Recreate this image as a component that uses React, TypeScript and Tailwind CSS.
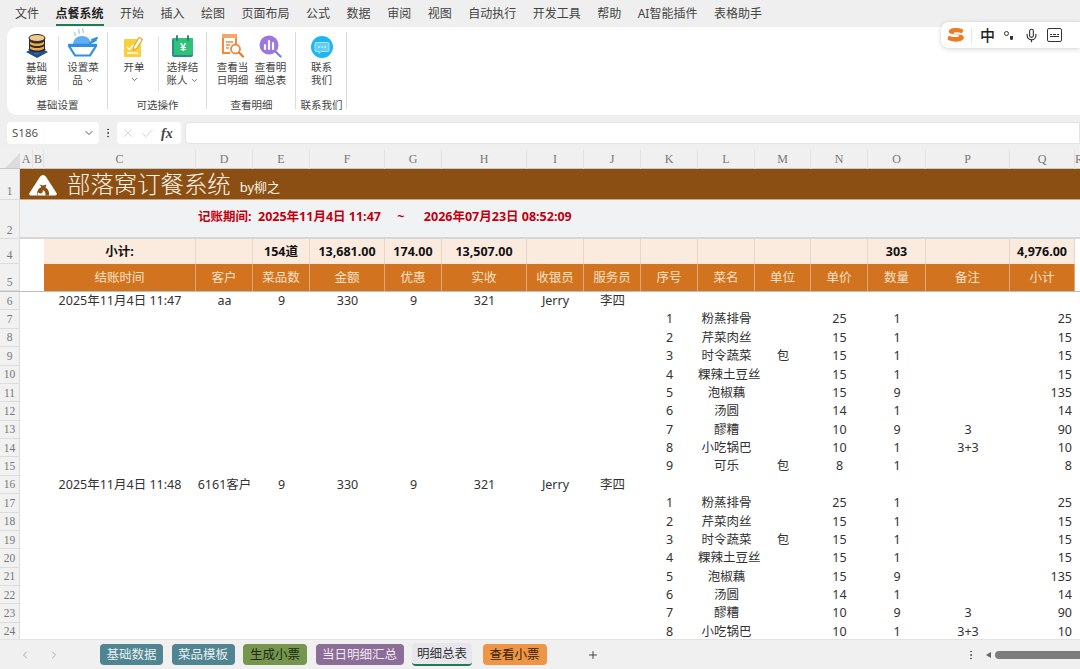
import { ChevronDown, ChevronLeft, ChevronRight, Plus, X, Check, Mic, EllipsisVertical } from 'lucide-react';

// row header + columns A..R, shared by every sheet row
const cols =
  'grid grid-cols-[20px_13px_11px_152px_57px_57px_75px_57px_85px_57px_57px_57px_57px_56px_57px_58px_84px_65px_1fr]';

const menus = ['文件', '点餐系统', '开始', '插入', '绘图', '页面布局', '公式', '数据', '审阅', '视图', '自动执行', '开发工具', '帮助', 'AI智能插件', '表格助手'];
const letters = ['A', 'B', 'C', 'D', 'E', 'F', 'G', 'H', 'I', 'J', 'K', 'L', 'M', 'N', 'O', 'P', 'Q', 'R'];
const subtotal = ['小计:', '', '154道', '13,681.00', '174.00', '13,507.00', '', '', '', '', '', '', '303', '', '4,976.00'];
const headers = ['结账时间', '客户', '菜品数', '金额', '优惠', '实收', '收银员', '服务员', '序号', '菜名', '单位', '单价', '数量', '备注', '小计'];

const dishes = [
  ['粉蒸排骨', '', '25', '1', '', '25'],
  ['芹菜肉丝', '', '15', '1', '', '15'],
  ['时令蔬菜', '包', '15', '1', '', '15'],
  ['粿辣土豆丝', '', '15', '1', '', '15'],
  ['泡椒藕', '', '15', '9', '', '135'],
  ['汤圆', '', '14', '1', '', '14'],
  ['醪糟', '', '10', '9', '3', '90'],
  ['小吃锅巴', '', '10', '1', '3+3', '10'],
  ['可乐', '包', '8', '1', '', '8'],
];

const tabs = [
  { name: '基础数据', cls: 'w-[63px] bg-[#4f8490] text-[#e6f0f2]' },
  { name: '菜品模板', cls: 'w-[63px] bg-[#4f8490] text-[#e6f0f2]' },
  { name: '生成小票', cls: 'w-[64px] bg-[#76964f] text-[#1d2a10]' },
  { name: '当日明细汇总', cls: 'w-[88px] bg-[#8b6d98] text-[#f1e8f4]' },
];

function DbIcon() {
  return (
    <svg width="24" height="24" viewBox="0 0 24 24">
      <path d="M12 12 23 18 12 24 1 18Z" fill="#1f4f8f" />
      <path d="M12 10 21 15.5 12 21 3 15.5Z" fill="#2d6fb5" />
      <path d="M4 4v11c0 2 3.6 3.6 8 3.6s8-1.600 8-3.600V4Z" fill="#2b2b2b" />
      <ellipse cx="12" cy="4" rx="8" ry="3.500" fill="#f4c98c" stroke="#2b2b2b" />
      <path d="M5 7.500c1.500 1.500 4 2 7 2s5.500-.5 7-2v2.500c-1.500 1.500-4 2-7 2s-5.500-.5-7-2Z" fill="#f0a94e" />
      <path d="M5 12c1.500 1.500 4 2 7 2s5.500-.5 7-2v2.500c-1.500 1.500-4 2-7 2s-5.500-.5-7-2Z" fill="#f0a94e" />
    </svg>
  );
}

function BowlIcon() {
  return (
    <svg width="30" height="30" viewBox="0 0 30 30">
      <path d="M11 1c-1 2 1 3 0 5M15 0c-1 2 1 3 0 5M7 4c-1 1.500 1 2.500 0 4" stroke="#a8cdf2" strokeWidth="1.300" fill="none" />
      <path d="M5 17c0-6 4-9 9-9s9 3 9 9Z" fill="#62aef0" />
      <path d="M24 12l5-2" stroke="#2f8fe6" strokeWidth="2" strokeLinecap="round" />
      <path d="M22 15l6-3" stroke="#2f8fe6" strokeWidth="2" strokeLinecap="round" />
      <path d="M1 18h27l-6 9.500H7Z" fill="#fff" stroke="#2f8fe6" strokeWidth="2.200" strokeLinejoin="round" />
      <path d="M1 17h27" stroke="#2f8fe6" strokeWidth="2.500" strokeLinecap="round" />
    </svg>
  );
}

function NoteIcon() {
  return (
    <svg width="22" height="22" viewBox="0 0 22 22">
      <rect x="1" y="3" width="17" height="18" rx="1" fill="#f9cf3b" />
      <path d="M4 11l2.500 2.500L11 8.500" stroke="#fff" strokeWidth="1.500" fill="none" />
      <path d="M4 17h11" stroke="#fff" strokeWidth="1.500" />
      <path d="M16 1.500l3.500 2-6 9-3 1.500.3-3.500Z" fill="#fff" stroke="#e9a826" strokeWidth="1.100" />
    </svg>
  );
}

function CalendarIcon() {
  return (
    <svg width="23" height="23" viewBox="0 0 23 23">
      <rect x="1" y="3" width="21" height="19" rx="2" fill="#2b8c8c" />
      <path d="M3 3h19v15a2 2 0 0 1-2 2H3Z" fill="#2fc07a" />
      <path d="M6 1v4M17 1v4" stroke="#1f7f70" strokeWidth="1.800" strokeLinecap="round" />
      <text x="12" y="16" textAnchor="middle" fontSize="11" fontWeight="700" fill="#fff" fontFamily="Liberation Sans">¥</text>
    </svg>
  );
}

function DocSearchIcon() {
  return (
    <svg width="24" height="24" viewBox="0 0 24 24">
      <path d="M2 1h13v9" fill="none" stroke="#f2893d" strokeWidth="2" />
      <path d="M2 1v18h7" fill="none" stroke="#f2893d" strokeWidth="2" />
      <rect x="1" y="0" width="15" height="4" fill="#f7a468" />
      <path d="M5 8h7M5 11h4M5 14h3" stroke="#f2893d" strokeWidth="1.500" />
      <circle cx="14.500" cy="15" r="4.500" fill="#fff" stroke="#f2893d" strokeWidth="1.800" />
      <path d="M18 18.500l4 4" stroke="#e8742a" strokeWidth="2.200" strokeLinecap="round" />
    </svg>
  );
}

function ChartSearchIcon() {
  return (
    <svg width="23" height="23" viewBox="0 0 23 23">
      <circle cx="10" cy="10" r="9.500" fill="#9a78dd" />
      <path d="M6 10v4M10 6v8M14 8v6" stroke="#fff" strokeWidth="2.200" strokeLinecap="round" />
      <path d="M17 17l4.500 4.500" stroke="#7b86d6" strokeWidth="2.400" strokeLinecap="round" />
    </svg>
  );
}

function ChatIcon() {
  return (
    <svg width="22" height="22" viewBox="0 0 22 22">
      <circle cx="11" cy="11" r="11" fill="#1fb6f0" />
      <path d="M5 6.500h12a1 1 0 0 1 1 1v7a1 1 0 0 1-1 1h-7l-2 2v-2H5a1 1 0 0 1-1-1v-7a1 1 0 0 1 1-1Z" fill="#62cdf6" stroke="#c4eefc" strokeWidth=".8" />
      <circle cx="8" cy="11" r=".8" fill="#fff" />
      <circle cx="11" cy="11" r=".8" fill="#fff" />
      <circle cx="14" cy="11" r=".8" fill="#fff" />
    </svg>
  );
}

function LogoIcon() {
  return (
    <svg width="30" height="22" viewBox="0 0 30 22">
      <path d="M15 1c1.500 0 2.500 1 3.500 2.500L28.500 19c.8 1.300 0 2.500-1.500 2.500H3c-1.500 0-2.300-1.200-1.500-2.500L11.500 3.500C12.500 2 13.500 1 15 1Z" fill="#fff" />
      <path d="M9 21.500c-.5-5 2-7.500 4.500-8.500l-2-2.500 3.500 1 3.500-1-1 3c2.500 1.500 4 4 3.500 8h-3.500c.5-3-1-5-3-5.500 1 1.500 0 3.500-2 3.500-1.500 0-2.500-1-2.500-2-.5 1.500-.5 3-.5 4.500Z" fill="#8b4f14" />
    </svg>
  );
}

function SogouIcon() {
  return (
    <svg width="18" height="16" viewBox="0 0 18 16">
      <path d="M16.500 3C13 .5 6 .5 3 2.500.5 4.500 2 6.500 5 7l6 .8c1.500.3 1.500 1.200.5 1.700-2 1-6.500.8-10-.8L.5 12.500c4 2.500 11.500 3 15 .5 2.500-2 1.500-4.500-2-5.200L7.500 7c-1.200-.3-1-1.200 0-1.500 2-.6 5-.4 7.500.8Z" fill="#ee7a22" />
    </svg>
  );
}

function RibbonBtn({ icon, lines, arrow, cls }: { icon: React.ReactNode; lines: string[]; arrow?: boolean; cls: string }) {
  return (
    <div className={`flex flex-col items-center text-[10.5px] leading-[13px] text-[#444] ${cls}`}>
      <div className="flex h-[32px] w-full items-end justify-center pb-[1px]">{icon}</div>
      <div className="mt-[2px] flex w-full flex-col items-center">
        {lines.map((l, i) => (
          <div key={i} className="flex items-center whitespace-nowrap">
            {l}
            {arrow && i === lines.length - 1 && <ChevronDown className="ml-[2px] h-[9px] w-[9px]" />}
          </div>
        ))}
        {arrow && lines.length === 1 && null}
      </div>
    </div>
  );
}

function RibbonGroup({ label, width, children }: { label: string; width: string; children: React.ReactNode }) {
  return (
    <div className={`relative flex h-full flex-col ${width}`}>
      <div className="flex h-[72px] items-start">{children}</div>
      <div className="text-center text-[10.5px] leading-[13px] text-[#444]">{label}</div>
      <div className="absolute right-0 top-[5px] h-[77px] w-px bg-[#dcdcdc]" />
    </div>
  );
}

function Sep() {
  return <div className="mt-[9px] h-[55px] w-px shrink-0 bg-[#e2e2e2]" />;
}

function RowHead({ n, cls = 'items-end pb-[1px]' }: { n: number; cls?: string }) {
  return (
    <div className={`flex justify-center border-b border-r border-[#dcdcdc] bg-[#f1f1f1] font-['Liberation_Serif',serif] text-[11.5px] leading-[14px] text-[#777] ${cls}`}>
      {n}
    </div>
  );
}

function InfoRow({ n, time, customer }: { n: number; time: string; customer: string }) {
  const cells = [time, customer, '9', '330', '9', '321', 'Jerry', '李四'];
  return (
    <div className={`${cols} h-[18.39px] text-[12.5px] leading-[18px] text-[#333]`}>
      <RowHead n={n} cls="items-center" />
      <div />
      <div />
      {cells.map((c, i) => (
        <div key={i} className="whitespace-nowrap text-center">{c}</div>
      ))}
    </div>
  );
}

function DishRow({ n, seq, dish }: { n: number; seq: number; dish: string[] }) {
  return (
    <div className={`${cols} h-[18.39px] text-[12.5px] leading-[18px] text-[#333]`}>
      <RowHead n={n} cls="items-center" />
      <div className="col-span-10" />
      <div className="text-center">{seq}</div>
      <div className="whitespace-nowrap text-center">{dish[0]}</div>
      <div className="text-center">{dish[1]}</div>
      <div className="text-center">{dish[2]}</div>
      <div className="text-center">{dish[3]}</div>
      <div className="text-center">{dish[4]}</div>
      <div className="pr-[3px] text-right">{dish[5]}</div>
    </div>
  );
}

export default function App() {
  return (
    <div className="relative flex h-[669px] w-[1080px] flex-col overflow-hidden bg-[#efefef] font-['Noto_Sans','Noto_Sans_CJK_SC',sans-serif]">
      {/* menu bar */}
      <div className="flex h-[27px] shrink-0 items-start gap-[16.500px] pl-[15px] pt-[5px] text-[12px] leading-[18px] text-[#444]">
        {menus.map((m) => (
          <div key={m} className={m === '点餐系统' ? 'whitespace-nowrap border-b-2 border-[#1e7a54] pb-[1px] font-bold text-[#222]' : 'whitespace-nowrap'}>
            {m}
          </div>
        ))}
      </div>

      {/* ribbon */}
      <div className="ml-[7px] flex h-[88px] shrink-0 rounded-l-[10px] bg-white">
        <RibbonGroup label="基础设置" width="w-[101px]">
          <RibbonBtn icon={<DbIcon />} lines={['基础', '数据']} cls="ml-[8px] w-[43px]" />
          <Sep />
          <RibbonBtn icon={<BowlIcon />} lines={['设置菜', '品']} arrow cls="w-[48px]" />
        </RibbonGroup>
        <RibbonGroup label="可选操作" width="w-[99px]">
          <div className="ml-[5px] w-[42px]">
            <RibbonBtn icon={<NoteIcon />} lines={['开单']} cls="w-full" />
            <div className="flex justify-center"><ChevronDown className="mt-[1px] h-[9px] w-[9px] text-[#444]" /></div>
          </div>
          <div className="ml-[3px]"><Sep /></div>
          <RibbonBtn icon={<CalendarIcon />} lines={['选择结', '账人']} arrow cls="ml-[2px] w-[43px]" />
        </RibbonGroup>
        <RibbonGroup label="查看明细" width="w-[89px]">
          <RibbonBtn icon={<DocSearchIcon />} lines={['查看当', '日明细']} cls="ml-[7px] w-[37px]" />
          <RibbonBtn icon={<ChartSearchIcon />} lines={['查看明', '细总表']} cls="ml-[1px] w-[37px]" />
        </RibbonGroup>
        <RibbonGroup label="联系我们" width="w-[51px]">
          <RibbonBtn icon={<ChatIcon />} lines={['联系', '我们']} cls="w-full" />
        </RibbonGroup>
      </div>

      {/* formula bar */}
      <div className="mt-[7px] flex h-[22px] shrink-0 items-stretch">
        <div className="ml-[7px] flex w-[92px] items-center justify-between rounded-[4px] bg-white pl-[5px] pr-[4px] text-[11.5px] text-[#555]">
          S186
          <ChevronDown className="h-[12px] w-[12px] text-[#555]" />
        </div>
        <div className="flex w-[18px] items-center justify-center">
          <EllipsisVertical className="h-[12px] w-[12px] text-[#444]" />
        </div>
        <div className="flex w-[64px] items-center gap-[5px] rounded-[4px] bg-white pl-[4px] text-[#c4c4c4]">
          <X className="h-[14px] w-[14px]" strokeWidth={1.2} />
          <Check className="h-[15px] w-[15px]" strokeWidth={1.2} />
          <span className="ml-[1px] font-['Liberation_Serif',serif] text-[14px] font-bold italic text-[#444]">fx</span>
        </div>
        <div className="ml-[4px] flex-1 rounded-l-[4px] border border-[#e4e4e4] bg-white" />
      </div>

      {/* sheet */}
      <div className="mt-[6px] min-h-0 flex-1 overflow-hidden bg-white">
        <div className={`${cols} h-[19px] border-b border-[#c9c9c9] bg-[#f0f0f0] font-['Liberation_Serif',serif] text-[12px] leading-[19px] text-[#777]`}>
          <div className="relative overflow-hidden">
            <div className="absolute bottom-[1px] right-0 h-0 w-0 border-b-[15px] border-l-[15px] border-b-[#dcdcdc] border-l-transparent" />
          </div>
          {letters.map((l) => (
            <div key={l} className="border-r border-[#e2e2e2] text-center">{l}</div>
          ))}
        </div>

        <div className={`${cols} h-[31px]`}>
          <RowHead n={1} />
          <div className="col-span-18 flex items-center overflow-hidden border-b border-[#c9a988] bg-[#8b4f14] text-[#fdf3e6]">
            <div className="ml-[8px] flex w-[37px] shrink-0 justify-start pt-[2px]"><LogoIcon /></div>
            <span className="whitespace-nowrap pl-[2px] text-[23.400px] leading-[31px] font-light">部落窝订餐系统</span>
            <span className="ml-[9px] mt-[5px] whitespace-nowrap text-[13px] leading-[18px]">by柳之</span>
          </div>
        </div>

        <div className={`${cols} h-[39px]`}>
          <RowHead n={2} />
          <div className="col-span-18 flex items-center border-b-2 border-[#d6d6d6] bg-[#f1f2f3] pb-[3px] pl-[178px]">
            <span className="whitespace-pre text-[12.500px] font-bold leading-[18px] text-[#c00010]">
              记账期间:  2025年11月4日 11:47     ~      2026年07月23日 08:52:09
            </span>
          </div>
        </div>

        <div className={`${cols} h-[25px]`}>
          <RowHead n={4} />
          <div />
          <div />
          {subtotal.map((c, i) => (
            <div key={i} className="whitespace-nowrap border-r border-[#e6d6ca] bg-[#fbeade] text-center text-[12.500px] font-bold leading-[25px] text-[#111]">
              {c}
            </div>
          ))}
          <div />
        </div>

        <div className={`${cols} h-[28px] border-b border-[#bdbdbd]`}>
          <RowHead n={5} />
          <div />
          <div />
          {headers.map((c) => (
            <div key={c} className="border-r border-[#e0a878] bg-[#d2741f] text-center text-[12.500px] leading-[27px] text-[#f8e0c8]">
              {c}
            </div>
          ))}
          <div />
        </div>

        <InfoRow n={6} time="2025年11月4日 11:47" customer="aa" />
        {dishes.map((d, i) => (
          <DishRow key={i} n={7 + i} seq={i + 1} dish={d} />
        ))}
        <InfoRow n={16} time="2025年11月4日 11:48" customer="6161客户" />
        {dishes.slice(0, 8).map((d, i) => (
          <DishRow key={i} n={17 + i} seq={i + 1} dish={d} />
        ))}
      </div>

      {/* sheet tabs */}
      <div className="flex h-[30px] shrink-0 items-center border-t border-[#e2e2e2] bg-[#f0f0f0] text-[12.500px] leading-[21px]">
        <ChevronLeft className="ml-[19px] h-[12px] w-[12px] text-[#aaa]" />
        <ChevronRight className="ml-[17px] h-[12px] w-[12px] text-[#aaa]" />
        <div className="ml-[40px] flex items-center gap-[8.500px]">
          {tabs.map((t) => (
            <div key={t.name} className={`h-[21px] whitespace-nowrap rounded-[4px] text-center ${t.cls}`}>{t.name}</div>
          ))}
          <div className="h-[23px] w-[60px] whitespace-nowrap rounded-[4px] border-b-2 border-[#1e7a54] bg-[#e6e6ec] text-center text-[#333]">明细总表</div>
          <div className="ml-[2px] h-[21px] w-[64px] whitespace-nowrap rounded-[4px] bg-[#ee9645] text-center text-[#3a1e08]">查看小票</div>
        </div>
        <Plus className="ml-[40px] h-[12px] w-[12px] text-[#444]" />
        <EllipsisVertical className="ml-[366px] h-[12px] w-[12px] text-[#555]" />
        <div className="ml-[9px] h-0 w-0 border-y-[3.500px] border-r-[5px] border-y-transparent border-r-[#666]" />
        <div className="ml-[4px] h-[8px] flex-1 rounded-l-full bg-[#7d7d7d]" />
      </div>

      {/* floating IME toolbar */}
      <div className="absolute left-[941px] top-[22px] flex h-[26px] w-[139px] items-center rounded-l-[8px] bg-white pl-[6px] text-[#333] shadow-[0_1px_5px_rgba(0,0,0,0.18)]">
        <SogouIcon />
        <div className="ml-[6px] h-[16px] w-px bg-[#e4e4e4]" />
        <span className="ml-[8px] font-['Noto_Sans_CJK_SC',sans-serif] text-[15px] font-medium leading-[20px] text-[#222]">中</span>
        <span className="ml-[9px] flex w-[11px] flex-col items-center">
          <span className="h-[5px] w-[5px] self-start rounded-full border border-[#333]" />
          <span className="ml-[4px] h-[4px] w-[3px] rounded-b-full bg-[#333]" />
        </span>
        <Mic className="ml-[9px] h-[15px] w-[15px]" strokeWidth={1.8} />
        <div className="ml-[8px] grid h-[14px] w-[15px] grid-cols-3 content-center gap-[1px] rounded-[2px] border border-[#333] px-[2px]">
          <span className="h-px bg-[#333]" />
          <span className="h-px bg-[#333]" />
          <span className="h-px bg-[#333]" />
          <span className="col-span-3 h-px bg-[#333]" />
        </div>
      </div>
    </div>
  );
}
